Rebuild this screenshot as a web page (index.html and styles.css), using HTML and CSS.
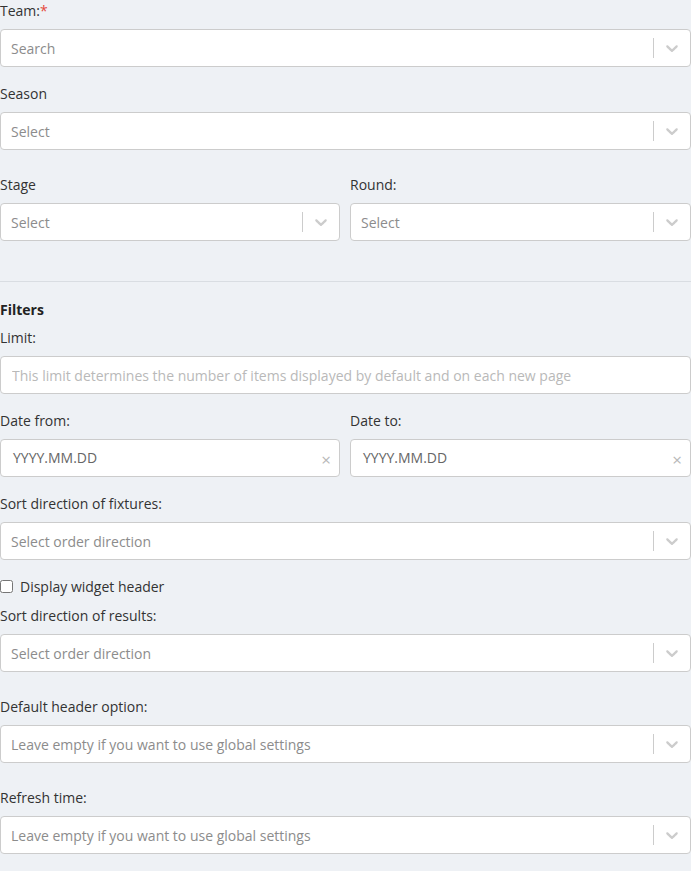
FILE: index.html
```html
<!DOCTYPE html>
<html lang="en">
<head>
    <meta charset="UTF-8">
    <meta name="viewport" content="width=device-width, initial-scale=1.0">
    <title>Widget settings</title>
    <link rel="stylesheet" href="styles.css">
</head>
<body>
    <div class="settings">
        <div class="field">
            <label>Team:<span class="required">*</span></label>
            <div class="select">
                <span class="placeholder">Search</span>
                <span class="separator"></span>
                <svg class="chevron" viewBox="0 0 20 20"><path d="M4.516 7.548c0.436-0.446 1.043-0.481 1.576 0l3.908 3.747 3.908-3.747c0.533-0.481 1.141-0.446 1.574 0 0.436 0.445 0.408 1.197 0 1.615-0.406 0.418-4.695 4.502-4.695 4.502-0.217 0.223-0.502 0.335-0.787 0.335s-0.57-0.112-0.789-0.335c0 0-4.287-4.084-4.695-4.502s-0.436-1.17 0-1.615z"/></svg>
            </div>
        </div>
        <div class="field wide">
            <label>Season</label>
            <div class="select">
                <span class="placeholder">Select</span>
                <span class="separator"></span>
                <svg class="chevron" viewBox="0 0 20 20"><path d="M4.516 7.548c0.436-0.446 1.043-0.481 1.576 0l3.908 3.747 3.908-3.747c0.533-0.481 1.141-0.446 1.574 0 0.436 0.445 0.408 1.197 0 1.615-0.406 0.418-4.695 4.502-4.695 4.502-0.217 0.223-0.502 0.335-0.787 0.335s-0.57-0.112-0.789-0.335c0 0-4.287-4.084-4.695-4.502s-0.436-1.17 0-1.615z"/></svg>
            </div>
        </div>
        <div class="row">
            <div class="field">
                <label>Stage</label>
                <div class="select">
                    <span class="placeholder">Select</span>
                    <span class="separator"></span>
                    <svg class="chevron" viewBox="0 0 20 20"><path d="M4.516 7.548c0.436-0.446 1.043-0.481 1.576 0l3.908 3.747 3.908-3.747c0.533-0.481 1.141-0.446 1.574 0 0.436 0.445 0.408 1.197 0 1.615-0.406 0.418-4.695 4.502-4.695 4.502-0.217 0.223-0.502 0.335-0.787 0.335s-0.57-0.112-0.789-0.335c0 0-4.287-4.084-4.695-4.502s-0.436-1.17 0-1.615z"/></svg>
                </div>
            </div>
            <div class="field">
                <label>Round:</label>
                <div class="select">
                    <span class="placeholder">Select</span>
                    <span class="separator"></span>
                    <svg class="chevron" viewBox="0 0 20 20"><path d="M4.516 7.548c0.436-0.446 1.043-0.481 1.576 0l3.908 3.747 3.908-3.747c0.533-0.481 1.141-0.446 1.574 0 0.436 0.445 0.408 1.197 0 1.615-0.406 0.418-4.695 4.502-4.695 4.502-0.217 0.223-0.502 0.335-0.787 0.335s-0.57-0.112-0.789-0.335c0 0-4.287-4.084-4.695-4.502s-0.436-1.17 0-1.615z"/></svg>
                </div>
            </div>
        </div>

        <hr class="divider">

        <h4 class="section-title">Filters</h4>
        <div class="field">
            <label>Limit:</label>
            <input class="text-input" type="text" placeholder="This limit determines the number of items displayed by default and on each new page">
        </div>
        <div class="row">
            <div class="field">
                <label>Date from:</label>
                <div class="date-input">
                    <span class="date-value">YYYY.MM.DD</span>
                    <span class="clear">&times;</span>
                </div>
            </div>
            <div class="field">
                <label>Date to:</label>
                <div class="date-input">
                    <span class="date-value">YYYY.MM.DD</span>
                    <span class="clear">&times;</span>
                </div>
            </div>
        </div>
        <div class="field">
            <label>Sort direction of fixtures:</label>
            <div class="select">
                <span class="placeholder">Select order direction</span>
                <span class="separator"></span>
                <svg class="chevron" viewBox="0 0 20 20"><path d="M4.516 7.548c0.436-0.446 1.043-0.481 1.576 0l3.908 3.747 3.908-3.747c0.533-0.481 1.141-0.446 1.574 0 0.436 0.445 0.408 1.197 0 1.615-0.406 0.418-4.695 4.502-4.695 4.502-0.217 0.223-0.502 0.335-0.787 0.335s-0.57-0.112-0.789-0.335c0 0-4.287-4.084-4.695-4.502s-0.436-1.17 0-1.615z"/></svg>
            </div>
        </div>
        <label class="checkbox">
            <input type="checkbox">
            <span>Display widget header</span>
        </label>
        <div class="field wide">
            <label>Sort direction of results:</label>
            <div class="select">
                <span class="placeholder">Select order direction</span>
                <span class="separator"></span>
                <svg class="chevron" viewBox="0 0 20 20"><path d="M4.516 7.548c0.436-0.446 1.043-0.481 1.576 0l3.908 3.747 3.908-3.747c0.533-0.481 1.141-0.446 1.574 0 0.436 0.445 0.408 1.197 0 1.615-0.406 0.418-4.695 4.502-4.695 4.502-0.217 0.223-0.502 0.335-0.787 0.335s-0.57-0.112-0.789-0.335c0 0-4.287-4.084-4.695-4.502s-0.436-1.17 0-1.615z"/></svg>
            </div>
        </div>
        <div class="field wide">
            <label>Default header option:</label>
            <div class="select">
                <span class="placeholder">Leave empty if you want to use global settings</span>
                <span class="separator"></span>
                <svg class="chevron" viewBox="0 0 20 20"><path d="M4.516 7.548c0.436-0.446 1.043-0.481 1.576 0l3.908 3.747 3.908-3.747c0.533-0.481 1.141-0.446 1.574 0 0.436 0.445 0.408 1.197 0 1.615-0.406 0.418-4.695 4.502-4.695 4.502-0.217 0.223-0.502 0.335-0.787 0.335s-0.57-0.112-0.789-0.335c0 0-4.287-4.084-4.695-4.502s-0.436-1.17 0-1.615z"/></svg>
            </div>
        </div>
        <div class="field last">
            <label>Refresh time:</label>
            <div class="select">
                <span class="placeholder">Leave empty if you want to use global settings</span>
                <span class="separator"></span>
                <svg class="chevron" viewBox="0 0 20 20"><path d="M4.516 7.548c0.436-0.446 1.043-0.481 1.576 0l3.908 3.747 3.908-3.747c0.533-0.481 1.141-0.446 1.574 0 0.436 0.445 0.408 1.197 0 1.615-0.406 0.418-4.695 4.502-4.695 4.502-0.217 0.223-0.502 0.335-0.787 0.335s-0.57-0.112-0.789-0.335c0 0-4.287-4.084-4.695-4.502s-0.436-1.17 0-1.615z"/></svg>
            </div>
        </div>
        <hr class="divider bottom">
    </div>
</body>
</html>
```

FILE: styles.css
```css
body {
    margin: 0;
    background-color: #eef1f5;
    font-family: 'Open Sans', sans-serif;
    font-size: 14px;
    color: #333;
}
.settings {
    display: flex;
    flex-direction: column;
    width: 691px;
}
.field {
    display: flex;
    flex-direction: column;
    margin-bottom: 16px;
}
.field.wide {
    margin-bottom: 24px;
}
.field.last {
    margin-bottom: 17px;
}
.field label {
    line-height: 21px;
    margin-bottom: 8px;
}
.required {
    color: #e5483b;
}
.row {
    display: grid;
    grid-template-columns: 340px 1fr;
    column-gap: 10px;
}
.select, .date-input, .text-input {
    box-sizing: border-box;
    height: 38px;
    background-color: #fff;
    border: 1px solid #ccc;
    border-radius: 4px;
}
.select {
    display: flex;
    align-items: center;
}
.select .placeholder {
    flex-grow: 1;
    padding: 0 10px;
    color: #8c8c8c;
    white-space: nowrap;
    overflow: hidden;
}
.select .separator {
    width: 1px;
    height: 20px;
    background-color: #ccc;
}
.select .chevron {
    width: 20px;
    height: 20px;
    padding: 8px;
    fill: #ccc;
}
.text-input {
    width: 100%;
    padding: 0 11px;
    font-family: inherit;
    font-size: 14px;
    color: #333;
    outline: none;
}
.text-input::placeholder {
    color: #b9b9b9;
}
.date-input {
    display: flex;
    align-items: center;
    justify-content: space-between;
    padding: 0 8px 2px 12px;
}
.date-value {
    color: #666;
}
.clear {
    color: #b8b8b8;
    font-size: 17px;
    line-height: 1;
    margin-top: 4px;
}
.divider {
    width: 100%;
    border: none;
    border-top: 1px solid #d9dde2;
    margin: 24px 0 17px;
}
.divider.bottom {
    margin: 0;
}
.section-title {
    margin: 0 0 7px;
    font-size: 14px;
    font-weight: 700;
    line-height: 21px;
    color: #222;
}
.checkbox {
    display: flex;
    align-items: center;
    gap: 7px;
    line-height: 21px;
    margin-bottom: 8px;
}
.checkbox input {
    margin: 0;
    width: 13px;
    height: 13px;
}
```
